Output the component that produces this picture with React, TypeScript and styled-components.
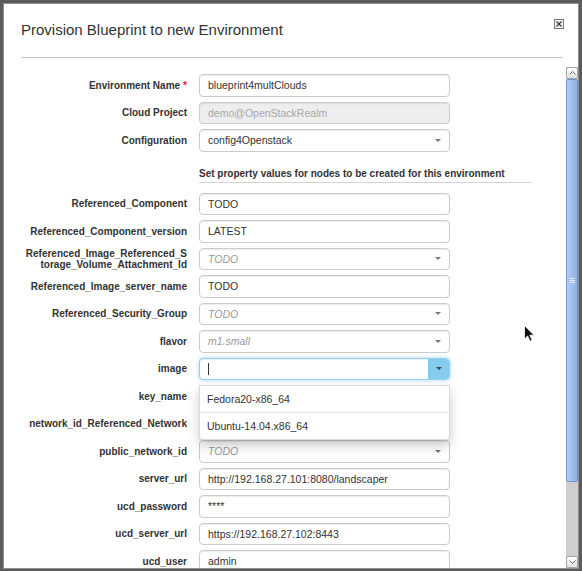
import React from "react";
import styled, { createGlobalStyle, css } from "styled-components";

const GlobalStyle = createGlobalStyle`
  html, body {
    margin: 0;
    padding: 0;
    background: #5c5c5c;
    font-family: "Liberation Sans", Arial, sans-serif;
  }
`;

type Field = {
  label: string;
  required?: boolean;
  value?: string;
  placeholder?: string;
  disabled?: boolean;
  select?: boolean;
  focused?: boolean;
  options?: string[];
};

const topFields: Field[] = [
  { label: "Environment Name", required: true, value: "blueprint4multClouds" },
  { label: "Cloud Project", value: "demo@OpenStackRealm", disabled: true },
  { label: "Configuration", value: "config4Openstack", select: true },
];

// key_name and network_id sit under the open image menu, so they show no text
const nodeFields: Field[] = [
  { label: "Referenced_Component", value: "TODO" },
  { label: "Referenced_Component_version", value: "LATEST" },
  {
    label: "Referenced_Image_Referenced_Storage_Volume_Attachment_Id",
    placeholder: "TODO",
    select: true,
  },
  { label: "Referenced_Image_server_name", value: "TODO" },
  { label: "Referenced_Security_Group", placeholder: "TODO", select: true },
  { label: "flavor", placeholder: "m1.small", select: true },
  {
    label: "image",
    focused: true,
    options: ["Fedora20-x86_64", "Ubuntu-14.04.x86_64"],
  },
  { label: "key_name", select: true },
  { label: "network_id_Referenced_Network", select: true },
  { label: "public_network_id", placeholder: "TODO", select: true },
  { label: "server_url", value: "http://192.168.27.101:8080/landscaper" },
  { label: "ucd_password", value: "****" },
  { label: "ucd_server_url", value: "https://192.168.27.102:8443" },
  { label: "ucd_user", value: "admin" },
];

export default function App() {
  return (
    <>
      <GlobalStyle />
      <Modal>
        <Header>
          <Title>Provision Blueprint to new Environment</Title>
          <CloseButton aria-label="close">
            <svg width="10" height="10" viewBox="0 0 10 10">
              <rect x="0.5" y="0.5" width="9" height="9" fill="#f4f4f4" stroke="#777" />
              <path d="M2.5 2.5 L7.5 7.5 M7.5 2.5 L2.5 7.5" stroke="#333" strokeWidth="1.2" />
            </svg>
          </CloseButton>
        </Header>

        <Body>
          <Content>
            <Form>
              {topFields.map((f) => (
                <FieldRow key={f.label} field={f} />
              ))}
              <SectionHeading>
                Set property values for nodes to be created for this environment
              </SectionHeading>
              {nodeFields.map((f) => (
                <FieldRow key={f.label} field={f} />
              ))}
            </Form>
          </Content>

          <ScrollBar>
            <ScrollButton>
              <svg width="7" height="4" viewBox="0 0 7 4">
                <path d="M0.5 3.5 L3.5 0.5 L6.5 3.5" fill="none" stroke="#666" />
              </svg>
            </ScrollButton>
            <Track>
              <Thumb>
                <Grip />
              </Thumb>
            </Track>
            <ScrollButton>
              <svg width="7" height="4" viewBox="0 0 7 4">
                <path d="M0.5 0.5 L3.5 3.5 L6.5 0.5" fill="none" stroke="#666" />
              </svg>
            </ScrollButton>
          </ScrollBar>
        </Body>

        <Pointer width="11" height="17" viewBox="0 0 11 17">
          <path
            d="M0.5 0.5 L0.5 14 L3.6 11 L6 16.2 L8.2 15.2 L5.8 10.2 L10 10.2 Z"
            fill="#111"
            stroke="#fff"
            strokeWidth="0.8"
          />
        </Pointer>
      </Modal>
    </>
  );
}

const FieldRow = ({ field }: { field: Field }) => (
  <Row>
    <Label>
      {field.label}
      {field.required && <Required>*</Required>}
    </Label>
    <FieldWrap>
      <Box $disabled={field.disabled} $focused={field.focused}>
        {field.focused && <TextCursor />}
        {field.value !== undefined ? (
          <Value $disabled={field.disabled}>{field.value}</Value>
        ) : (
          field.placeholder && <Placeholder>{field.placeholder}</Placeholder>
        )}
        {field.select && <Caret />}
        {field.focused && (
          <DropButton>
            <Caret $dark />
          </DropButton>
        )}
      </Box>
      {field.options && (
        <Menu>
          {field.options.map((o) => (
            <MenuItem key={o}>{o}</MenuItem>
          ))}
        </Menu>
      )}
    </FieldWrap>
  </Row>
);

const Modal = styled.div`
  position: relative;
  margin: 3px 3px 0;
  height: 566px;
  box-sizing: border-box;
  border: 1px solid #8e8e8e;
  background: #fff;
  display: flex;
  flex-direction: column;
  overflow: hidden;
`;

const Header = styled.div`
  margin: 0 15px 0 17px;
  padding: 16px 0 17px;
  border-bottom: 1px solid #c6c6c6;
  display: flex;
  justify-content: space-between;
  align-items: flex-start;
`;

const Title = styled.h4`
  margin: 0;
  font-size: 15px;
  line-height: 20px;
  font-weight: normal;
  color: #333;
`;

const CloseButton = styled.button`
  margin: -1px -1px 0 0;
  padding: 0;
  border: 0;
  background: none;
  width: 10px;
  height: 10px;
  display: flex;
`;

const Body = styled.div`
  flex: 1;
  min-height: 0;
  margin-top: 9px;
  display: flex;
`;

const Content = styled.div`
  flex: 1;
  overflow: hidden;
  padding-top: 7px;
`;

const Form = styled.div`
  display: flex;
  flex-direction: column;
  gap: 5px;
`;

const Row = styled.div`
  display: grid;
  grid-template-columns: 163px 251px;
  column-gap: 12px;
  align-items: center;
  padding-left: 20px;
`;

const Label = styled.label`
  text-align: right;
  font-size: 10px;
  line-height: 11px;
  font-weight: bold;
  color: #333;
  word-break: break-all;
`;

const Required = styled.span`
  color: #d9231d;
  margin-left: 3px;
`;

const SectionHeading = styled.div`
  margin: 0 0 4.5px 195px;
  width: 333px;
  padding: 10px 0 1.5px;
  border-bottom: 1px solid #d4d4d4;
  font-size: 10px;
  line-height: 14px;
  font-weight: bold;
  color: #333;
`;

const FieldWrap = styled.div`
  position: relative;
  height: 22.5px;
`;

const Box = styled.div<{ $disabled?: boolean; $focused?: boolean }>`
  height: 100%;
  box-sizing: border-box;
  display: flex;
  align-items: center;
  padding: 0 8px;
  border: 1px solid #cbcbcb;
  border-radius: 4px;
  background: #fff;
  box-shadow: inset 0 1px 1px rgba(0, 0, 0, 0.08);
  font-size: 10.5px;
  overflow: hidden;

  ${(p) =>
    p.$disabled &&
    css`
      background: #eee;
    `}

  ${(p) =>
    p.$focused &&
    css`
      padding-right: 0;
      border-color: #8fd1f3;
      box-shadow: inset 0 1px 1px rgba(0, 0, 0, 0.06), 0 0 4px rgba(102, 175, 233, 0.55);
    `}
`;

const Value = styled.span<{ $disabled?: boolean }>`
  color: ${(p) => (p.$disabled ? "#a8a8a8" : "#333")};
  white-space: nowrap;
`;

const Placeholder = styled.span`
  color: #9a9a9a;
  font-style: italic;
  white-space: nowrap;
`;

const TextCursor = styled.span`
  width: 1px;
  height: 12px;
  background: #333;
`;

const Caret = styled.span<{ $dark?: boolean }>`
  margin-left: auto;
  width: 0;
  height: 0;
  border-left: 3px solid transparent;
  border-right: 3px solid transparent;
  border-top: 3px solid ${(p) => (p.$dark ? "#444" : "#777")};
`;

const DropButton = styled.span`
  margin-left: auto;
  align-self: stretch;
  width: 21px;
  display: flex;
  align-items: center;
  justify-content: center;
  background: #86cbee;
  border-radius: 0 3px 3px 0;

  ${Caret} {
    margin: 0;
  }
`;

const Menu = styled.div`
  position: absolute;
  z-index: 2;
  top: calc(100% + 5px);
  left: 0;
  right: 0;
  background: #fff;
  border: 1px solid rgba(0, 0, 0, 0.15);
  border-radius: 0 0 4px 4px;
  box-shadow: 0 6px 12px rgba(0, 0, 0, 0.2);
`;

const MenuItem = styled.div`
  height: 26px;
  display: flex;
  align-items: center;
  padding: 0 7px;
  font-size: 10.5px;
  color: #333;

  & + & {
    border-top: 1px solid #e6e6e6;
  }
`;

const ScrollBar = styled.div`
  width: 12px;
  display: flex;
  flex-direction: column;
  background: #cfcfcf;
`;

const ScrollButton = styled.div`
  height: 12px;
  box-sizing: border-box;
  border: 1px solid #a4a4a4;
  border-radius: 2px;
  background: linear-gradient(#fdfdfd, #e4e4e4);
  display: flex;
  align-items: center;
  justify-content: center;
`;

const Track = styled.div`
  flex: 1;
  display: flex;
  flex-direction: column;
`;

const Thumb = styled.div`
  height: 403px;
  box-sizing: border-box;
  border: 1px solid #7194cb;
  border-radius: 2px;
  background: linear-gradient(to right, #b5cdf0, #8fb0e3);
  display: flex;
  align-items: center;
  justify-content: center;
`;

const Grip = styled.span`
  width: 5px;
  height: 5px;
  background: repeating-linear-gradient(
    #e9f0fb 0 1px,
    transparent 1px 2px
  );
`;

const Pointer = styled.svg`
  position: absolute;
  left: 520px;
  top: 321px;
`;
